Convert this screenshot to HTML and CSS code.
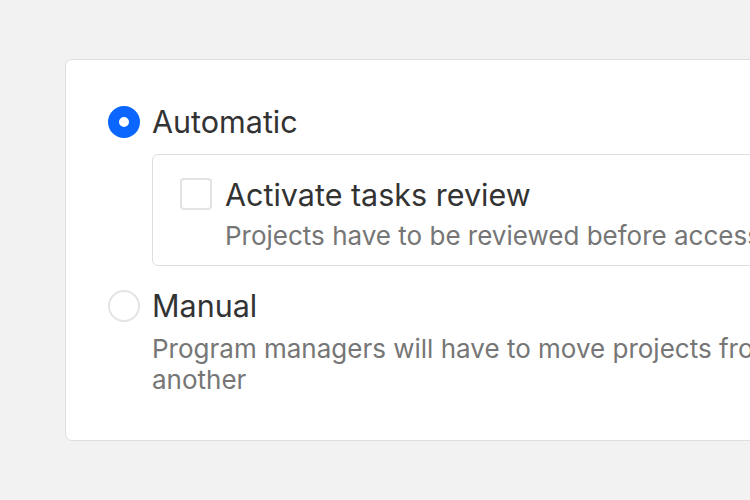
FILE: index.html
```html
<!DOCTYPE html>
<html>
<head>
<meta charset="utf-8">
<link rel="stylesheet" href="styles.css">
</head>
<body>
<div class="card">
  <div class="option">
    <span class="radio radio-on"></span>
    <div class="option-body">
      <div class="title">Automatic</div>
      <div class="subbox">
        <span class="checkbox"></span>
        <div class="sub-body">
          <div class="title">Activate tasks review</div>
          <div class="desc">Projects have to be reviewed before accessing the next step</div>
        </div>
      </div>
    </div>
  </div>
  <div class="option option-second">
    <span class="radio"></span>
    <div class="option-body">
      <div class="title">Manual</div>
      <div class="desc desc-manual">Program managers will have to move projects from one step to another</div>
    </div>
  </div>
</div>
</body>
</html>
```
FILE: styles.css
```css
html, body {
  margin: 0;
  background: #f2f2f2;
  overflow: hidden;
  height: 500px;
}
body {
  padding: 59px 0 0 65px;
  font-family: Inter, "Noto Sans", sans-serif;
}
.card {
  width: 960px;
  box-sizing: border-box;
  background: #fff;
  border: 1px solid #dedede;
  border-radius: 7px;
  padding: 44px 42px 45px 42px;
}
.option {
  display: flex;
  gap: 12px;
  align-items: flex-start;
}
.option-second {
  margin-top: 22px;
}
.radio {
  flex: none;
  width: 32px;
  height: 32px;
  margin-top: 2px;
  box-sizing: border-box;
  border-radius: 50%;
  border: 2px solid #e3e3e3;
  background: #fff;
}
.radio-on {
  border: 11px solid #0a66ff;
}
.option-body {
  width: 830px;
}
.title {
  font-size: 30.5px;
  line-height: 36px;
  color: #333;
}
.desc {
  font-size: 26px;
  line-height: 31px;
  color: #767676;
}
.desc-manual {
  margin-top: 9px;
}
.subbox {
  margin-top: 14px;
  display: flex;
  gap: 13px;
  border: 1px solid #dedede;
  border-radius: 6px;
  padding: 22px 20px 14px 27px;
  overflow: hidden;
}
.checkbox {
  flex: none;
  width: 32px;
  height: 32px;
  margin-top: 1px;
  box-sizing: border-box;
  border: 2px solid #e3e3e3;
  border-radius: 4px;
}
.sub-body .desc {
  margin-top: 7px;
  white-space: nowrap;
}
```
